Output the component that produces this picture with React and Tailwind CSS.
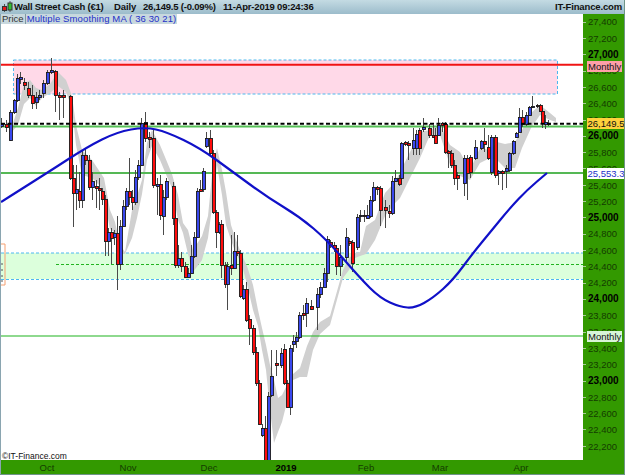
const FONT = { fontFamily: '"Liberation Sans", Arial, sans-serif' }

// x, wick top, wick bottom, body top, body bottom, r(ed) or b(lue)
const candles = [
  [2, 118, 128, 124, 126, 'b'], [7, 120, 132, 124, 127, 'r'], [11, 110, 141, 112, 140, 'b'],
  [15, 99, 114, 100, 112, 'b'], [18, 74, 102, 78, 100, 'b'], [21, 72, 84, 77, 79, 'b'],
  [25, 78, 90, 82, 85, 'r'], [29, 82, 98, 88, 95, 'r'], [33, 85, 109, 95, 103, 'r'],
  [37, 92, 109, 97, 102, 'b'], [40, 90, 100, 95, 97, 'b'], [44, 80, 98, 83, 93, 'b'],
  [48, 70, 85, 72, 83, 'b'], [52, 58, 74, 70, 72, 'b'], [56, 70, 112, 71, 95, 'r'],
  [60, 92, 120, 95, 97, 'r'], [64, 90, 118, 95, 97, 'r'], [71, 95, 180, 96, 178, 'r'],
  [74, 165, 227, 178, 193, 'r'], [77, 165, 210, 189, 193, 'b'], [80, 172, 208, 191, 200, 'r'],
  [83, 150, 208, 155, 200, 'b'], [86, 148, 165, 155, 160, 'r'], [90, 155, 190, 160, 187, 'r'],
  [93, 172, 200, 181, 187, 'b'], [97, 180, 208, 186, 188, 'r'], [100, 178, 210, 188, 190, 'r'],
  [103, 188, 205, 191, 199, 'r'], [106, 195, 256, 199, 241, 'r'], [109, 228, 256, 232, 241, 'b'],
  [112, 228, 264, 232, 238, 'r'], [115, 230, 245, 233, 237, 'b'], [118, 216, 290, 233, 264, 'r'],
  [121, 220, 270, 226, 264, 'b'], [124, 200, 226, 206, 226, 'b'], [127, 188, 210, 191, 206, 'b'],
  [130, 158, 205, 191, 197, 'r'], [133, 190, 210, 197, 202, 'r'], [136, 170, 205, 177, 202, 'b'],
  [139, 160, 180, 165, 177, 'b'], [142, 118, 166, 123, 165, 'b'], [146, 112, 142, 122, 138, 'r'],
  [150, 132, 148, 137, 139, 'r'], [154, 130, 188, 138, 185, 'r'], [158, 178, 215, 184, 186, 'b'],
  [161, 175, 220, 184, 215, 'r'], [164, 190, 235, 197, 216, 'b'], [167, 178, 200, 181, 197, 'b'],
  [174, 182, 225, 186, 218, 'r'], [176, 215, 268, 218, 265, 'r'], [179, 245, 268, 258, 265, 'b'],
  [182, 252, 272, 258, 266, 'r'], [186, 262, 278, 266, 277, 'r'], [189, 268, 278, 273, 277, 'b'],
  [192, 245, 273, 256, 273, 'b'], [195, 232, 258, 237, 256, 'b'], [198, 188, 238, 191, 237, 'b'],
  [201, 180, 192, 189, 191, 'r'], [204, 168, 192, 171, 189, 'b'], [207, 132, 148, 138, 146, 'b'],
  [211, 130, 155, 138, 153, 'r'], [214, 150, 214, 153, 212, 'r'], [217, 210, 248, 212, 232, 'r'],
  [220, 222, 234, 224, 232, 'b'], [222, 220, 278, 224, 265, 'r'], [226, 262, 288, 265, 284, 'r'],
  [228, 262, 310, 266, 284, 'b'], [232, 235, 275, 265, 268, 'r'], [235, 232, 268, 251, 268, 'b'],
  [238, 235, 256, 251, 253, 'r'], [241, 250, 298, 253, 296, 'r'], [244, 285, 300, 289, 298, 'b'],
  [247, 282, 322, 289, 320, 'r'], [250, 315, 345, 319, 328, 'r'], [254, 325, 355, 328, 352, 'r'],
  [257, 347, 386, 352, 383, 'r'], [260, 380, 425, 383, 424, 'r'], [263, 424, 437, 428, 435, 'b'],
  [266, 416, 460, 428, 460, 'r'], [269, 392, 460, 396, 460, 'b'], [272, 350, 397, 376, 395, 'b'],
  [277, 350, 376, 363, 365, 'r'], [282, 348, 368, 353, 365, 'b'], [285, 344, 385, 349, 383, 'r'],
  [288, 380, 408, 383, 407, 'r'], [291, 345, 415, 348, 407, 'b'], [294, 335, 352, 341, 344, 'b'],
  [297, 332, 348, 337, 341, 'b'], [300, 312, 339, 315, 337, 'b'], [304, 305, 320, 313, 315, 'r'],
  [307, 298, 327, 303, 313, 'b'], [312, 300, 310, 306, 309, 'r'], [318, 288, 330, 294, 307, 'b'],
  [321, 282, 298, 287, 294, 'b'], [325, 268, 287, 273, 287, 'b'], [328, 236, 282, 239, 273, 'b'],
  [331, 240, 248, 242, 245, 'r'], [335, 242, 252, 245, 248, 'r'], [337, 245, 275, 248, 266, 'r'],
  [341, 245, 276, 257, 266, 'b'], [347, 228, 262, 237, 257, 'b'], [350, 238, 246, 241, 243, 'r'],
  [353, 240, 272, 242, 263, 'r'], [358, 214, 250, 217, 247, 'b'], [361, 210, 222, 215, 216, 'b'],
  [365, 210, 222, 215, 216, 'r'], [368, 205, 218, 215, 218, 'b'], [371, 196, 218, 200, 216, 'b'],
  [374, 182, 202, 187, 200, 'b'], [378, 186, 195, 187, 189, 'r'], [381, 186, 226, 188, 210, 'r'],
  [386, 200, 228, 207, 210, 'r'], [390, 205, 218, 211, 213, 'r'], [393, 176, 215, 181, 213, 'b'],
  [396, 170, 182, 178, 181, 'b'], [400, 175, 186, 178, 184, 'r'], [402, 142, 180, 143, 178, 'b'],
  [406, 141, 146, 142, 144, 'r'], [409, 141, 160, 143, 145, 'r'], [414, 128, 155, 140, 148, 'b'],
  [417, 130, 155, 134, 148, 'b'], [420, 128, 155, 130, 148, 'r'], [424, 118, 132, 127, 129, 'b'],
  [430, 124, 138, 128, 135, 'r'], [434, 125, 138, 135, 137, 'r'], [436, 128, 143, 135, 143, 'r'],
  [439, 118, 136, 125, 135, 'b'], [443, 122, 132, 123, 125, 'r'], [446, 122, 154, 124, 152, 'r'],
  [449, 150, 168, 151, 153, 'r'], [452, 150, 168, 153, 165, 'r'], [455, 160, 185, 165, 178, 'r'],
  [458, 172, 190, 175, 178, 'r'], [465, 155, 196, 158, 183, 'b'], [468, 155, 200, 158, 173, 'r'],
  [471, 155, 178, 157, 172, 'r'], [476, 140, 160, 147, 158, 'b'], [482, 140, 150, 141, 148, 'b'],
  [485, 128, 152, 141, 144, 'r'], [489, 135, 160, 147, 158, 'r'], [492, 135, 175, 137, 172, 'b'],
  [496, 135, 178, 137, 175, 'r'], [499, 170, 185, 171, 173, 'b'], [503, 170, 190, 171, 173, 'r'],
  [507, 165, 188, 168, 171, 'b'], [510, 152, 172, 153, 170, 'b'], [514, 140, 155, 141, 153, 'b'],
  [517, 132, 138, 133, 137, 'b'], [520, 108, 132, 117, 132, 'b'], [523, 110, 127, 117, 124, 'r'],
  [527, 112, 126, 115, 124, 'b'], [530, 106, 116, 107, 115, 'b'], [533, 96, 108, 106, 107, 'b'],
  [538, 104, 108, 105, 106, 'r'], [541, 104, 112, 105, 111, 'r'], [543, 108, 128, 111, 123, 'r'],
  [546, 115, 129, 122, 124, 'b'], [549, 120, 126, 123, 124, 'r'],
]

// x, band top, band bottom
const band = [
  [10, 132, 134], [18, 108, 125], [24, 84, 104], [30, 80, 98], [36, 88, 106], [42, 90, 98], [50, 84, 93],
  [58, 72, 86], [66, 80, 92], [72, 96, 108], [76, 125, 145], [82, 150, 175], [92, 160, 178], [100, 172, 186],
  [104, 178, 198], [110, 210, 229], [115, 222, 233], [120, 245, 253], [125, 252, 254], [132, 210, 238],
  [137, 196, 218], [142, 180, 194], [147, 143, 160], [152, 130, 146], [160, 145, 160], [165, 157, 172],
  [172, 174, 188], [178, 195, 220], [183, 223, 233], [188, 230, 254], [193, 250, 272], [202, 236, 260],
  [208, 216, 238], [213, 165, 200], [217, 148, 165], [222, 170, 195], [226, 192, 225], [231, 225, 240],
  [236, 240, 254], [241, 253, 262], [247, 266, 284], [253, 285, 310], [258, 310, 326], [262, 328, 350],
  [266, 345, 370], [270, 365, 410], [274, 380, 443], [278, 398, 432], [282, 395, 422], [287, 385, 402],
  [293, 374, 380], [300, 368, 377], [307, 346, 377], [313, 332, 350], [320, 322, 334], [330, 316, 325],
  [343, 270, 278], [349, 258, 270], [355, 253, 258], [360, 252, 256], [366, 226, 254], [375, 220, 240],
  [385, 193, 216], [395, 182, 203], [400, 172, 198], [410, 152, 178], [420, 132, 158], [430, 130, 135],
  [440, 125, 135], [450, 145, 165], [460, 152, 176], [470, 170, 180], [480, 148, 163], [490, 150, 158],
  [497, 142, 160], [505, 144, 168], [515, 142, 168], [522, 130, 148], [531, 113, 128], [540, 105, 115],
  [550, 113, 120], [556, 118, 122],
]

const ma = [
  [1, 202], [47, 173], [87, 147], [117, 132], [145, 127], [167, 132], [200, 148], [233, 172], [267, 197],
  [300, 217], [327, 240], [360, 278], [380, 298], [400, 307], [415, 308], [433, 298], [453, 280], [473, 253],
  [492, 230], [510, 208], [527, 190], [547, 173],
]

// smooth the average line through the midpoints of its points
function smooth(pts) {
  let d = 'M' + pts[0][0] + ' ' + pts[0][1]
  for (let i = 1; i < pts.length - 1; i++) {
    const mx = (pts[i][0] + pts[i + 1][0]) / 2
    const my = (pts[i][1] + pts[i + 1][1]) / 2
    d += 'Q' + pts[i][0] + ' ' + pts[i][1] + ' ' + mx + ' ' + my
  }
  const last = pts[pts.length - 1]
  return d + 'L' + last[0] + ' ' + last[1]
}

const axis = ['27,400', '27,200', '27,000', '26,800', '26,600', '26,400', '26,200', '26,000', '25,800', '25,600', '25,400', '25,200', '25,000', '24,800', '24,600', '24,400', '24,200', '24,000', '23,800', '23,600', '23,400', '23,200', '23,000', '22,800', '22,600', '22,400', '22,200']
const months = [
  { label: 'Oct', w: 'w-[90px]' }, { label: 'Nov', w: 'w-[72px]' }, { label: 'Dec', w: 'w-[90px]' },
  { label: '2019', w: 'w-[64px]', bold: true }, { label: 'Feb', w: 'w-[96px]' }, { label: 'Mar', w: 'w-[52px]' },
  { label: 'Apr', w: 'w-[110px]' },
]

function Chart() {
  const bandPoints = band.map((p) => p[0] + ',' + p[1]).concat([...band].reverse().map((p) => p[0] + ',' + p[2])).join(' ')
  return (
    <svg width="582" height="436" viewBox="1 24 582 436" className="block bg-white">
      <rect x="13.5" y="60" width="544" height="34" fill="#ffd9e8" stroke="#4db8ee" strokeDasharray="3 2" />
      <rect x="1" y="253" width="582" height="26" fill="#dcffdc" />
      <line x1="1" x2="583" y1="253" y2="253" stroke="#4db8ee" strokeDasharray="3 2" />
      <line x1="1" x2="583" y1="279.5" y2="279.5" stroke="#4db8ee" strokeDasharray="3 2" />
      <line x1="56" x2="583" y1="264.5" y2="264.5" stroke="#22b422" strokeDasharray="3 2" />
      <path d="M1 244h4v41h-4" fill="none" stroke="#f5a070" />
      <path d="M1 264h2M1 270h2M1 276h2M1 281h2" stroke="#555" />
      <polygon points={bandPoints} fill="#d0d0d0" />
      <line x1="1" x2="583" y1="64.7" y2="64.7" stroke="#f01414" strokeWidth="2" />
      <line x1="1" x2="583" y1="336" y2="336" stroke="#1fb41f" strokeWidth="1.2" />
      <line x1="1" x2="583" y1="173" y2="173" stroke="#55b855" strokeWidth="2" />
      <line x1="1" x2="583" y1="126.5" y2="126.5" stroke="#55c055" strokeWidth="2" />
      {candles.map(([x, hi, lo]) => (
        <line key={x} x1={x - 0.5} x2={x - 0.5} y1={hi} y2={lo} stroke="#4a4a4a" />
      ))}
      {candles.map(([x, , , top, bot, c]) => (
        <rect key={x} x={x - 1.5} y={top + 0.5} width="3" height={bot - top} fill={c === 'r' ? '#ff0c0c' : '#3a48ee'} stroke="#1a1a1a" strokeWidth="0.9" />
      ))}
      <path d={smooth(ma)} fill="none" stroke="#1010c8" strokeWidth="2.2" />
      <line x1="1" x2="583" y1="123.7" y2="123.7" stroke="#000" strokeWidth="2" strokeDasharray="4 2.5" />
      <text x="2" y="459" fontSize="8.5" fill="#111">©IT-Finance.com</text>
    </svg>
  )
}

function CandleIcon() {
  return (
    <svg width="12" height="12" viewBox="0 0 12 12" className="shrink-0">
      <path d="M3.5 3v8M9 0v11" stroke="#555" />
      <rect x="1.5" y="5.5" width="4" height="4" fill="#e81818" stroke="#333" />
      <rect x="7" y="2" width="4" height="7" fill="#30c030" stroke="#333" />
    </svg>
  )
}

export default function App() {
  return (
    <div style={FONT} className="w-[625px] h-[475px] overflow-hidden bg-[#339900] flex flex-col border-r border-b border-[#6f9488]">
      <header className="h-[14px] shrink-0 flex items-center pl-[1px] pr-[2px] bg-gradient-to-b from-[#c4dbe3] to-[#9cbccb] text-[9.5px] font-bold text-[#111] whitespace-nowrap">
        <CandleIcon />
        <span className="ml-[1px] w-[100px] tracking-[-0.22px]">Wall Street Cash (€1)</span>
        <span className="w-[29px] tracking-[-0.1px]">Daily</span>
        <span className="w-[80px] tracking-[-0.2px]">26,149.5 (-0.09%)</span>
        <span className="tracking-[-0.2px]">11-Apr-2019 09:24:36</span>
        <span className="ml-auto tracking-[-0.15px]">IT-Finance.com</span>
      </header>
      <div className="flex h-[446px] shrink-0 border-l border-[#8aa5b0]">
        <div className="flex flex-col w-[582px] shrink-0">
          <div className="h-[10px] flex bg-white">
            <div className="flex items-center bg-[#c8d8de] text-[9.5px] leading-none whitespace-nowrap">
              <span className="px-[1px] text-[#333] border-r border-[#7f98a3]">Price</span>
              <span className="px-[1px] text-[#2530c8] tracking-[0.12px]">Multiple Smoothing MA ( 36 30 21)</span>
            </div>
          </div>
          <Chart />
        </div>
        <div className="relative flex-1 overflow-hidden">
          <div className="flex flex-col text-[9.5px] leading-none text-[#143c00]">
            {axis.map((a) => (
              <div key={a} className={'h-[16.32px] flex items-center ' + (a.endsWith('000') ? 'font-bold text-black text-[10px]' : '')}>
                <span className="w-[3px] h-px bg-[#a9c998] mr-[2px]" />
                {a}
              </div>
            ))}
          </div>
          <div className="absolute left-[4px] top-[47px] h-[11px] px-[1px] bg-[#ff9fa8] text-[9.5px] leading-[11px] text-[#111]">Monthly</div>
          <div className="absolute left-[4px] top-[104px] h-[11px] w-[38px] bg-[#ffd23c] text-[9.5px] leading-[11px] text-center text-[#111]">26,149.5</div>
          <div className="absolute left-[4px] top-[154px] h-[11px] w-[38px] bg-white text-[9.5px] leading-[11px] text-center text-[#2530c8]">25,553.3</div>
          <div className="absolute left-[4px] top-[317px] h-[11px] px-[1px] bg-[#d8f5d8] text-[9.5px] leading-[11px] text-[#111]">Monthly</div>
        </div>
      </div>
      <div className="h-[14px] shrink-0 flex pl-[1px] text-[9.5px] leading-[16px] text-[#143c00] border-l border-[#8aa5b0]">
        {months.map((m) => (
          <div key={m.label} className={m.w + ' text-center ' + (m.bold ? 'font-bold text-black' : '')}>
            {m.label}
          </div>
        ))}
      </div>
    </div>
  )
}
